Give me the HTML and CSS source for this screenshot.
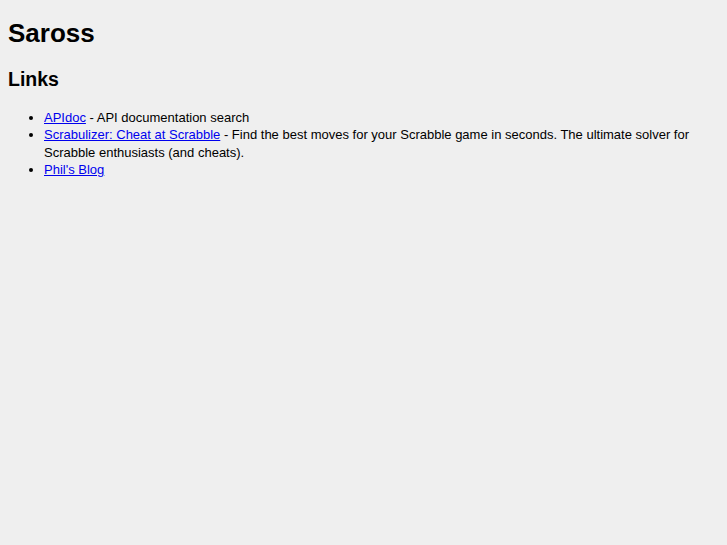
FILE: index.html
```html
<!DOCTYPE html>
<html lang="en">
<head>
    <meta charset="UTF-8">
    <title>Saross</title>
    <link rel="stylesheet" href="styles.css">
</head>
<body>
    <h1>Saross</h1>
    <h2>Links</h2>
    <ul class="links">
        <li><a href="#">APIdoc</a> - API documentation search</li>
        <li><a href="#">Scrabulizer: Cheat at Scrabble</a> - Find the best moves for your Scrabble game in seconds. The ultimate solver for Scrabble enthusiasts (and cheats).</li>
        <li><a href="#">Phil's Blog</a></li>
    </ul>
</body>
</html>
```

FILE: styles.css
```css
html {
    background-color: #efefef;
}
body {
    font-family: "Liberation Sans", Arial, sans-serif;
    font-size: 13px;
    color: #000;
    margin: 8px;
}
h1 {
    font-size: 26px;
    margin: 10px 0 19px;
}
h2 {
    font-size: 19.5px;
    margin: 16px 0 18px;
}
.links {
    padding-left: 36px;
    margin: 0;
    line-height: 17.3px;
}
.links a {
    color: #0000ee;
}
```
